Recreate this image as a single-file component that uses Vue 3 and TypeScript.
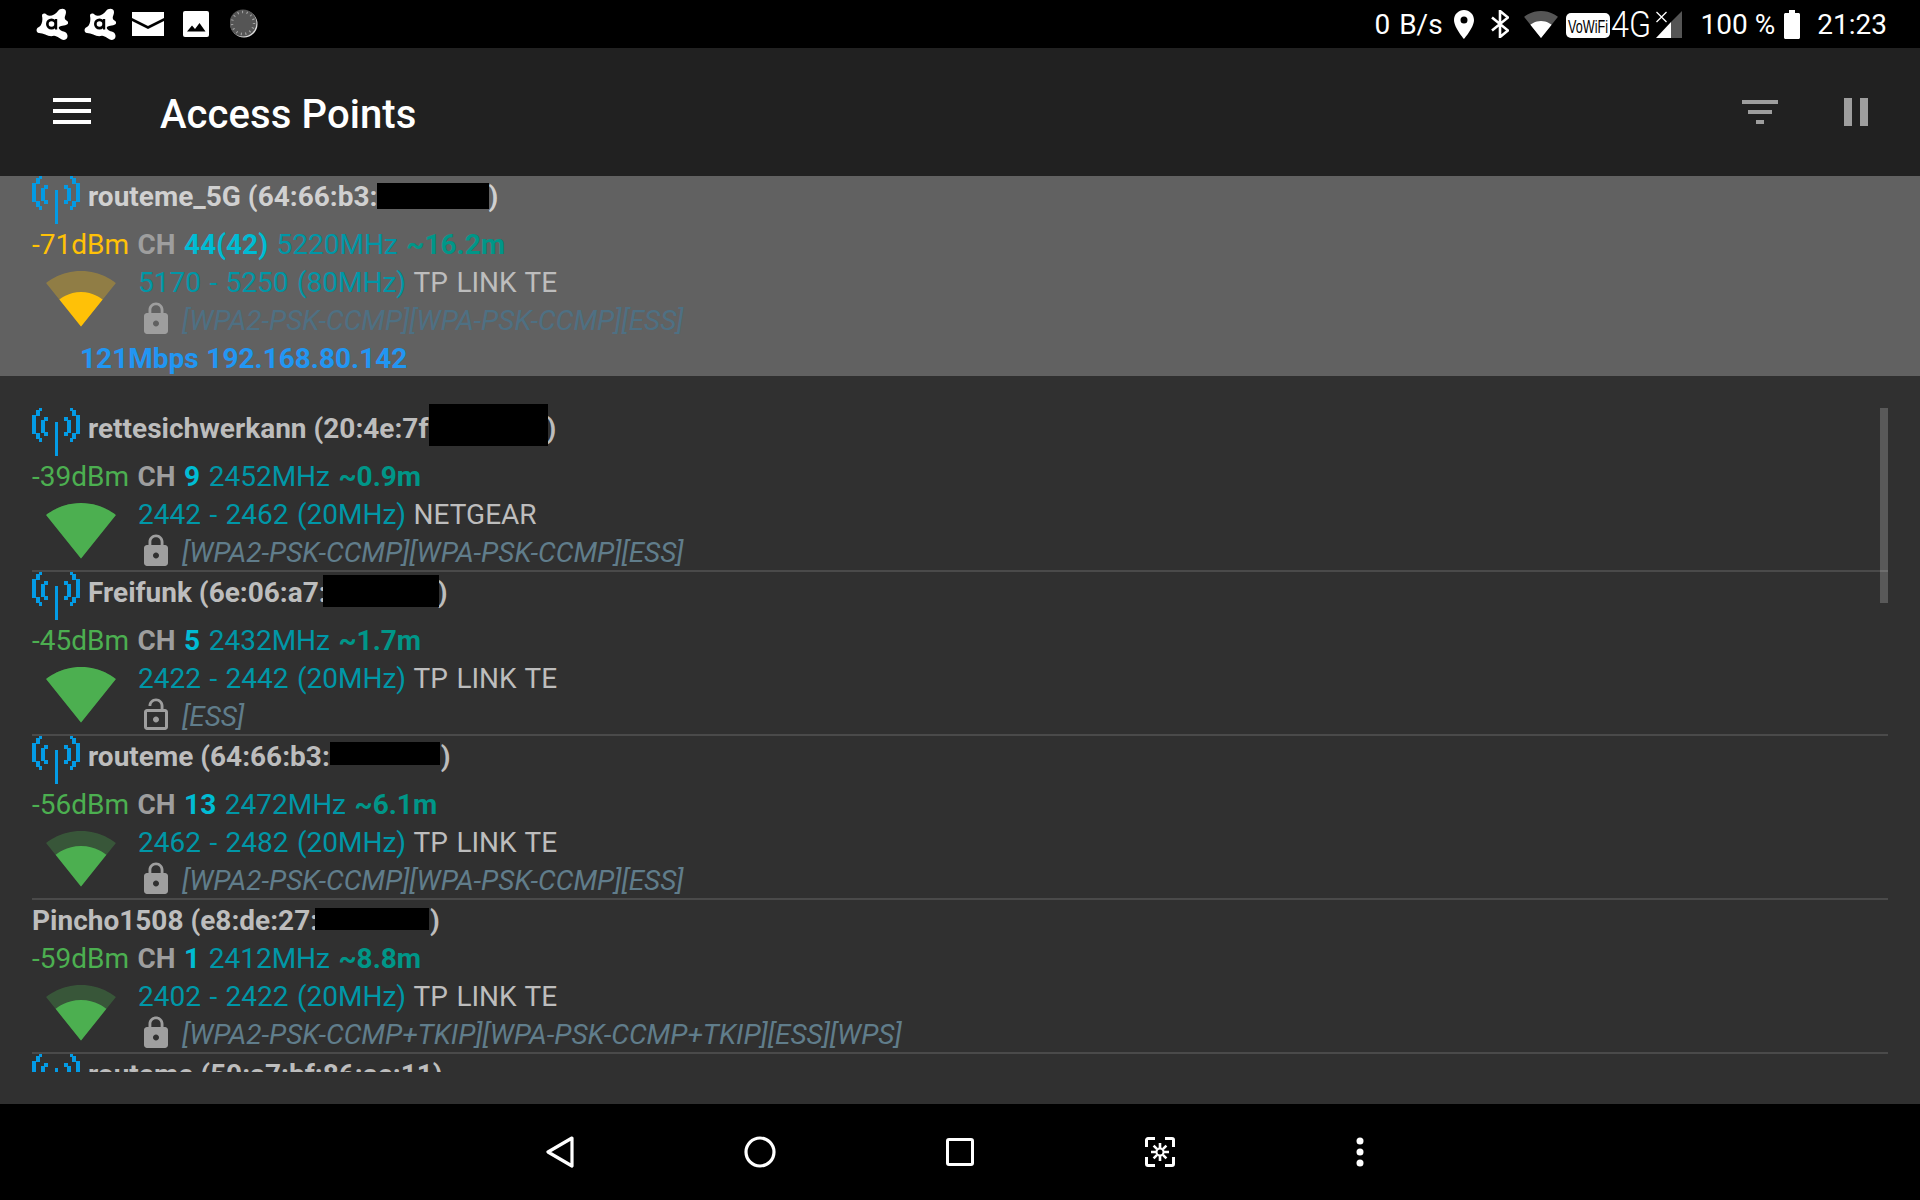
<script setup lang="ts">
interface Ap {
  name: string;
  gap: number;
  maskLeft: number;
  maskTop: number;
  maskW: number;
  maskH: number;
  ap: boolean;
  dbm: string;
  ch: string;
  freq: string;
  dist: string;
  range: string;
  vendor: string;
  sec: string;
  open?: boolean;
  bars: number;
  tone: string;
  conn?: string;
}

const wifiFull =
  "M12.01 21.49L23.64 7c-.45-.34-4.93-4-11.64-4C5.28 3 .81 6.66.36 7l11.63 14.49.01.01.01-.01z";
const wifiBars: Record<number, string> = {
  2: "M4.79 12.52l7.2 8.98H12l.01-.01 7.2-8.98C18.85 12.24 16.1 10 12 10s-6.85 2.24-7.21 2.52z",
  3: "M3.53 10.95l8.46 10.54.01.01.01-.01 8.46-10.54C20.04 10.62 16.81 8 12 8c-4.81 0-8.04 2.62-8.47 2.95z",
  4: wifiFull,
};
const lockPath =
  "M18 8h-1V6c0-2.76-2.24-5-5-5S7 3.24 7 6v2H6c-1.1 0-2 .9-2 2v10c0 1.1.9 2 2 2h12c1.1 0 2-.9 2-2V10c0-1.1-.9-2-2-2zm-6 9c-1.1 0-2-.9-2-2s.9-2 2-2 2 .9 2 2-.9 2-2 2zm3.1-9H8.9V6c0-1.71 1.39-3.1 3.1-3.1 1.71 0 3.1 1.39 3.1 3.1v2z";
const lockOpenPath =
  "M12 17c1.1 0 2-.9 2-2s-.9-2-2-2-2 .9-2 2 .9 2 2 2zm6-9h-1V6c0-2.76-2.24-5-5-5S7 3.24 7 6h1.9c0-1.71 1.39-3.1 3.1-3.1 1.71 0 3.1 1.39 3.1 3.1v2H6c-1.1 0-2 .9-2 2v10c0 1.1.9 2 2 2h12c1.1 0 2-.9 2-2V10c0-1.1-.9-2-2-2zm0 12H6V10h12v10z";
const avast =
  "M22 3C24 0 30 0 30 4C30 7 28 9 29 11C30 13 33 13 32 15.500C31 18 25 17 23 19C22 21 25 23 29 24C33 26 32 32 28 32C24 32 21 27 17 28C12 29 8 25 3 25C-.5 24 0 20 3 19C6 17 7 12 6 8C6 5 9 5 11 7C14 9 19 7 22 3z";

const wpa = "[WPA2-PSK-CCMP][WPA-PSK-CCMP][ESS]";

const selected: Ap = {
  name: "routeme_5G (64:66:b3:",
  gap: 111,
  maskLeft: 0,
  maskTop: -23,
  maskW: 112,
  maskH: 26,
  ap: true,
  dbm: "-71dBm",
  ch: "44(42)",
  freq: "5220MHz",
  dist: "~16.2m",
  range: "5170 - 5250 (80MHz)",
  vendor: "TP LINK TE",
  sec: wpa,
  bars: 2,
  tone: "#ffc107",
  conn: "121Mbps 192.168.80.142",
};

const items: Ap[] = [
  {
    name: "rettesichwerkann (20:4e:7f",
    gap: 118,
    maskLeft: 1,
    maskTop: -34,
    maskW: 119,
    maskH: 42,
    ap: true,
    dbm: "-39dBm",
    ch: "9",
    freq: "2452MHz",
    dist: "~0.9m",
    range: "2442 - 2462 (20MHz)",
    vendor: "NETGEAR",
    sec: wpa,
    bars: 4,
    tone: "#4caf50",
  },
  {
    name: "Freifunk (6e:06:a7:",
    gap: 111,
    maskLeft: -4,
    maskTop: -27,
    maskW: 116,
    maskH: 32,
    ap: true,
    dbm: "-45dBm",
    ch: "5",
    freq: "2432MHz",
    dist: "~1.7m",
    range: "2422 - 2442 (20MHz)",
    vendor: "TP LINK TE",
    sec: "[ESS]",
    open: true,
    bars: 4,
    tone: "#4caf50",
  },
  {
    name: "routeme (64:66:b3:",
    gap: 111,
    maskLeft: 0,
    maskTop: -24,
    maskW: 110,
    maskH: 23,
    ap: true,
    dbm: "-56dBm",
    ch: "13",
    freq: "2472MHz",
    dist: "~6.1m",
    range: "2462 - 2482 (20MHz)",
    vendor: "TP LINK TE",
    sec: wpa,
    bars: 3,
    tone: "#4caf50",
  },
  {
    name: "Pincho1508 (e8:de:27:",
    gap: 112,
    maskLeft: -3,
    maskTop: -22,
    maskW: 114,
    maskH: 22,
    ap: false,
    dbm: "-59dBm",
    ch: "1",
    freq: "2412MHz",
    dist: "~8.8m",
    range: "2402 - 2422 (20MHz)",
    vendor: "TP LINK TE",
    sec: "[WPA2-PSK-CCMP+TKIP][WPA-PSK-CCMP+TKIP][ESS][WPS]",
    bars: 3,
    tone: "#4caf50",
  },
  {
    name: "routeme (50:a7:bf:86:ae:11)",
    gap: 0,
    maskLeft: 0,
    maskTop: 0,
    maskW: 0,
    maskH: 0,
    ap: true,
    dbm: "-62dBm",
    ch: "6",
    freq: "2437MHz",
    dist: "~12.1m",
    range: "2427 - 2447 (20MHz)",
    vendor: "TP LINK TE",
    sec: wpa,
    bars: 3,
    tone: "#4caf50",
  },
];

const first: Ap[] = [selected];
const apBlocks = [
  [7, 0, 3, 3],
  [4, 2, 4, 6],
  [0, 7, 4, 19],
  [4, 25, 4, 6],
  [7, 30, 3, 4],
  [12, 9, 4, 4],
  [9, 12, 4, 13],
  [12, 24, 4, 4],
];
</script>

<template>
  <div class="screen">
    <header class="status">
      <svg v-for="n in 2" :key="n" class="s-avast" viewBox="0 0 32 32">
        <path :d="avast" fill="#fff" />
        <circle cx="15.5" cy="16" r="5.5" fill="#000" />
        <circle cx="15.5" cy="16" r="2.8" fill="#fff" />
        <rect x="19" y="11" width="2.2" height="10.5" fill="#000" />
      </svg>
      <svg class="s-mail" width="32" height="24" viewBox="0 0 32 24">
        <path fill="#fff" d="M0 0h32v6L16 14 0 6z" />
        <path fill="#fff" d="M0 9l16 8 16-8v15H0z" />
      </svg>
      <svg class="s-image" width="26" height="26" viewBox="0 0 26 26">
        <rect width="26" height="26" rx="2" fill="#fff" />
        <path fill="#000" d="M4 20.5l5-6 3 3.5 4.5-6 6 8.5z" />
      </svg>
      <svg class="s-spin" width="28" height="30" viewBox="0 0 28 30">
        <circle cx="14" cy="15" r="13.5" fill="#ddd" />
        <circle cx="13" cy="14" r="13.5" fill="#555" />
        <circle
          cx="13"
          cy="14"
          r="11"
          fill="none"
          stroke="#aaa"
          stroke-width="2.4"
          stroke-dasharray="1 3.600"
        />
      </svg>

      <span class="s-text s-rate">0 B/s</span>
      <svg class="s-pin" width="20" height="29" viewBox="0 0 20 29">
        <path
          fill="#fff"
          fill-rule="evenodd"
          d="M10 0C4.5 0 0 4.4 0 10c0 7.500 10 19 10 19s10-11.500 10-19C20 4.400 15.500 0 10 0zm0 13.500a3.500 3.500 0 1 1 0-7 3.500 3.500 0 0 1 0 7z"
        />
      </svg>
      <svg class="s-bt" width="18" height="28" viewBox="0 0 18 28">
        <path
          fill="none"
          stroke="#fff"
          stroke-width="2.600"
          d="M1 7.500L17 20.500 9 27V1l8 6.500L1 20.500"
        />
      </svg>
      <svg class="s-wifi" width="34" height="27" viewBox="0 0 24 19">
        <path fill="#555" d="M12 19L24 4.100C23.500 3.700 18.900 0 12 0S.5 3.700 0 4.100z" />
        <path fill="#fff" d="M12 19L19.500 9.700C19.100 9.400 16.300 7 12 7S4.900 9.400 4.500 9.700z" />
      </svg>
      <svg class="s-vo" width="44" height="25" viewBox="0 0 44 25">
        <rect width="44" height="25" rx="5" fill="#fff" />
        <text
          x="2"
          y="19.500"
          textLength="40"
          lengthAdjust="spacingAndGlyphs"
          class="vo-text"
        >VoWiFi</text>
      </svg>
      <svg class="s-4g" width="37" height="30" viewBox="0 0 37 30">
        <text
          x="-2"
          y="28"
          textLength="40"
          lengthAdjust="spacingAndGlyphs"
          class="g-text"
        >4G</text>
      </svg>
      <svg class="s-sig" width="26" height="28" viewBox="0 0 26 28">
        <path fill="#555" d="M26 1v27H15V12z" />
        <path fill="#fff" d="M15 12v16H0z" />
        <path stroke="#fff" stroke-width="1.300" d="M0.500 2l10 10M10.500 2l-10 10" />
      </svg>
      <span class="s-text s-batt">100 %</span>
      <svg class="s-bat" width="16" height="29" viewBox="0 0 16 29">
        <path fill="#fff" d="M5 0h6v3h3.500c.800 0 1.500.700 1.500 1.500V27.500c0 .800-.700 1.500-1.500 1.500h-13C.700 29 0 28.300 0 27.500V4.500C0 3.700.700 3 1.500 3H5z" />
      </svg>
      <span class="s-text s-time">21:23</span>
    </header>

    <div class="toolbar">
      <svg class="t-menu" width="38" height="26" viewBox="0 0 38 26">
        <path fill="#fff" d="M0 0h38v4H0zM0 11h38v4H0zM0 22h38v4H0z" />
      </svg>
      <h1 class="title">Access Points</h1>
      <svg class="t-filter" width="36" height="24" viewBox="0 0 36 24">
        <path fill="#9e9e9e" d="M0 0h36v4H0zM6 10h24v4H6zM14 20h8v4h-8z" />
      </svg>
      <svg class="t-pause" width="24" height="28" viewBox="0 0 24 28">
        <path fill="#9e9e9e" d="M0 0h8v28H0zM16 0h8v28h-8z" />
      </svg>
    </div>

    <section v-for="item in first" :key="item.name" class="item selected">
      <div class="head">
        <svg class="ap" width="48" height="48" viewBox="0 0 48 48" shape-rendering="crispEdges">
          <g fill="#039be5">
            <rect v-for="(b, i) in apBlocks" :key="i" :x="b[0]" :y="b[1]" :width="b[2]" :height="b[3]" />
            <g transform="matrix(-1 0 0 1 48 0)">
              <rect v-for="(b, i) in apBlocks" :key="i" :x="b[0]" :y="b[1]" :width="b[2]" :height="b[3]" />
            </g>
            <rect x="23" y="14" width="3" height="34" />
          </g>
        </svg>
        <span class="name">{{ item.name }}<span class="gap" :style="{ width: item.gap + 'px' }"><span
              class="mask"
              :style="{ left: item.maskLeft + 'px', top: item.maskTop + 'px', width: item.maskW + 'px', height: item.maskH + 'px' }"
            ></span></span>)</span>
      </div>
      <div class="row">
        <span :style="{ color: item.tone }">{{ item.dbm }}</span>
        <b class="ch">CH</b>
        <b class="num">{{ item.ch }}</b>
        <span class="freq">{{ item.freq }}</span>
        <b class="dist">{{ item.dist }}</b>
      </div>
      <div class="detail">
        <svg class="wifi" width="72" height="72" viewBox="0 0 24 24">
          <path :d="wifiFull" :fill="item.tone" fill-opacity="0.3" />
          <path :d="wifiBars[item.bars]" :fill="item.tone" />
        </svg>
        <div class="lines">
          <div class="row range-row">
            <span class="range">{{ item.range }}</span>
            <span class="vendor">{{ item.vendor }}</span>
          </div>
          <div class="row sec-row">
            <svg class="lock" width="36" height="36" viewBox="0 0 24 24">
              <path :d="item.open ? lockOpenPath : lockPath" fill="#9e9e9e" />
            </svg>
            <i class="sec">{{ item.sec }}</i>
          </div>
        </div>
      </div>
      <div class="row conn"><b>{{ item.conn }}</b></div>
    </section>

    <div class="list">
      <section v-for="item in items" :key="item.name" class="item boxed">
        <div class="head" :class="{ compact: !item.ap }">
          <svg v-if="item.ap" class="ap" width="48" height="48" viewBox="0 0 48 48" shape-rendering="crispEdges">
            <g fill="#039be5">
              <rect v-for="(b, i) in apBlocks" :key="i" :x="b[0]" :y="b[1]" :width="b[2]" :height="b[3]" />
              <g transform="matrix(-1 0 0 1 48 0)">
                <rect v-for="(b, i) in apBlocks" :key="i" :x="b[0]" :y="b[1]" :width="b[2]" :height="b[3]" />
              </g>
              <rect x="23" y="14" width="3" height="34" />
            </g>
          </svg>
          <span class="name">{{ item.name }}<template v-if="item.gap"><span class="gap" :style="{ width: item.gap + 'px' }"><span
                class="mask"
                :style="{ left: item.maskLeft + 'px', top: item.maskTop + 'px', width: item.maskW + 'px', height: item.maskH + 'px' }"
              ></span></span>)</template></span>
        </div>
        <div class="row">
          <span :style="{ color: item.tone }">{{ item.dbm }}</span>
          <b class="ch">CH</b>
          <b class="num">{{ item.ch }}</b>
          <span class="freq">{{ item.freq }}</span>
          <b class="dist">{{ item.dist }}</b>
        </div>
        <div class="detail">
          <svg class="wifi" width="72" height="72" viewBox="0 0 24 24">
            <path :d="wifiFull" :fill="item.tone" fill-opacity="0.3" />
            <path :d="wifiBars[item.bars]" :fill="item.tone" />
          </svg>
          <div class="lines">
            <div class="row range-row">
              <span class="range">{{ item.range }}</span>
              <span class="vendor">{{ item.vendor }}</span>
            </div>
            <div class="row sec-row">
              <svg class="lock" width="36" height="36" viewBox="0 0 24 24">
                <path :d="item.open ? lockOpenPath : lockPath" fill="#9e9e9e" />
              </svg>
              <i class="sec">{{ item.sec }}</i>
            </div>
          </div>
        </div>
      </section>
      <div class="scrollbar"></div>
    </div>

    <div class="spacer"></div>

    <nav class="nav">
      <div class="cell">
        <svg width="28" height="32" viewBox="0 0 28 32">
          <path d="M26 2L2 16l24 14z" fill="none" stroke="#fff" stroke-width="3.200" stroke-linejoin="round" />
        </svg>
      </div>
      <div class="cell">
        <svg width="32" height="32" viewBox="0 0 32 32">
          <circle cx="16" cy="16" r="14" fill="none" stroke="#fff" stroke-width="3.200" />
        </svg>
      </div>
      <div class="cell">
        <svg width="28" height="28" viewBox="0 0 28 28">
          <rect x="1.500" y="1.500" width="25" height="25" rx="1.500" fill="none" stroke="#fff" stroke-width="3" />
        </svg>
      </div>
      <div class="cell">
        <svg width="30" height="30" viewBox="0 0 30 30">
          <path
            d="M1.500 10V3a1.500 1.500 0 0 1 1.500-1.500h7M20 1.500h7A1.500 1.500 0 0 1 28.500 3v7M28.500 20v7a1.500 1.500 0 0 1-1.500 1.500h-7M10 28.500H3A1.500 1.500 0 0 1 1.500 27v-7"
            fill="none"
            stroke="#fff"
            stroke-width="3"
          />
          <circle cx="15" cy="15" r="3.500" fill="none" stroke="#fff" stroke-width="2" />
          <path
            d="M15 6v5M15 19v5M6 15h5M19 15h5M8.600 8.600l3.500 3.500M17.900 17.900l3.500 3.500M21.400 8.600l-3.500 3.500M12.100 17.900l-3.500 3.500"
            stroke="#fff"
            stroke-width="2.600"
          />
        </svg>
      </div>
      <div class="cell">
        <svg width="8" height="30" viewBox="0 0 8 30">
          <circle cx="4" cy="4" r="3.500" fill="#fff" />
          <circle cx="4" cy="15" r="3.500" fill="#fff" />
          <circle cx="4" cy="26" r="3.500" fill="#fff" />
        </svg>
      </div>
    </nav>
  </div>
</template>

<style>
html,
body {
  margin: 0;
  background: #303030;
}
</style>

<style scoped>
.screen {
  width: 1920px;
  height: 1200px;
  display: flex;
  flex-direction: column;
  background: #303030;
  font-family: Roboto, "Liberation Sans", sans-serif;
  font-size: 28px;
  overflow: hidden;
}
.status {
  height: 48px;
  flex: none;
  background: #000;
  display: flex;
  align-items: center;
  padding-left: 36px;
  padding-right: 33px;
  box-sizing: border-box;
  color: #fff;
}
.s-avast {
  width: 32px;
  height: 32px;
  margin-right: 16px;
}
.s-image {
  margin-left: 19px;
}
.s-spin {
  margin-left: 21px;
}
.s-text {
  font-size: 28px;
  white-space: nowrap;
}
.s-rate {
  margin-left: auto;
  word-spacing: 2px;
}
.s-pin {
  margin-left: 11px;
}
.s-bt {
  margin-left: 17px;
}
.s-wifi {
  margin-left: 15px;
}
.s-vo {
  margin-left: 8px;
  margin-top: 3px;
}
.vo-text {
  font-family: "Liberation Sans", sans-serif;
  font-size: 19px;
  fill: #000;
}
.s-4g {
  margin-left: 3px;
  overflow: visible;
}
.g-text {
  font-family: Roboto, sans-serif;
  font-weight: 300;
  font-size: 36px;
  fill: #fff;
}
.s-sig {
  margin-left: 6px;
}
.s-batt {
  margin-left: 19px;
}
.s-bat {
  margin-left: 9px;
}
.s-time {
  margin-left: 17px;
}
.toolbar {
  height: 128px;
  flex: none;
  background: #212121;
  display: flex;
  align-items: center;
  padding-left: 53px;
  box-sizing: border-box;
}
.t-menu {
  margin-top: -2px;
}
.title {
  margin: 4px 0 0 69px;
  font-size: 40px;
  font-weight: 500;
  letter-spacing: 0.1px;
  color: #fff;
  flex: 1;
}
.t-filter {
  margin-right: 66px;
}
.t-pause {
  margin-right: 52px;
}
.item {
  padding-left: 32px;
  box-sizing: border-box;
}
.selected {
  height: 200px;
  flex: none;
  background: #616161;
}
.list {
  position: relative;
  height: 696px;
  flex: none;
  padding: 32px 32px 0 32px;
  box-sizing: border-box;
  overflow: hidden;
}
.boxed {
  padding-left: 0;
  height: 164px;
  border-bottom: 2px solid #4a4a4a;
}
.boxed:nth-child(4) {
  height: 154px;
}
.head {
  height: 48px;
  display: flex;
  align-items: flex-start;
}
.head.compact {
  height: 38px;
}
.ap {
  width: 48px;
  height: 48px;
  flex: none;
  margin-right: 8px;
}
.name {
  font-weight: 700;
  color: #bdbdbd;
  line-height: 42px;
  white-space: nowrap;
}
.selected .name {
  color: #d0d0d0;
}
.gap {
  display: inline-block;
  position: relative;
  height: 0;
}
.mask {
  position: absolute;
  background: #000;
}
.row {
  height: 38px;
  padding-top: 4px;
  box-sizing: border-box;
  line-height: 34px;
  display: flex;
  align-items: center;
  gap: 8.5px;
  white-space: nowrap;
  word-spacing: 1.7px;
}
.row b {
  font-weight: 700;
}
.range-row {
  gap: 7.5px;
  word-spacing: 1.5px;
}
.ch {
  color: #9e9e9e;
}
.num {
  color: #00bcd4;
}
.freq,
.range {
  color: #0097a7;
}
.dist {
  color: #009688;
}
.vendor {
  color: #bdbdbd;
}
.detail {
  display: flex;
  height: 76px;
}
.wifi {
  flex: none;
  margin-left: 13px;
  margin-right: 21px;
}
.lines {
  flex: 1;
}
.sec-row {
  gap: 8px;
}
.lock {
  flex: none;
  margin-top: -4px;
}
.sec {
  color: #607d8b;
  font-style: italic;
}
.selected .sec {
  color: #4e7083;
}
.conn {
  padding-left: 48px;
  color: #2196f3;
  word-spacing: 0.8px;
}
.scrollbar {
  position: absolute;
  left: 1880px;
  top: 32px;
  width: 8px;
  height: 195px;
  background: rgba(255, 255, 255, 0.2);
}
.spacer {
  flex: 1;
}
.nav {
  height: 96px;
  flex: none;
  background: #000;
  display: flex;
  justify-content: center;
  align-items: center;
}
.cell {
  width: 200px;
  display: flex;
  justify-content: center;
  align-items: center;
}
</style>
